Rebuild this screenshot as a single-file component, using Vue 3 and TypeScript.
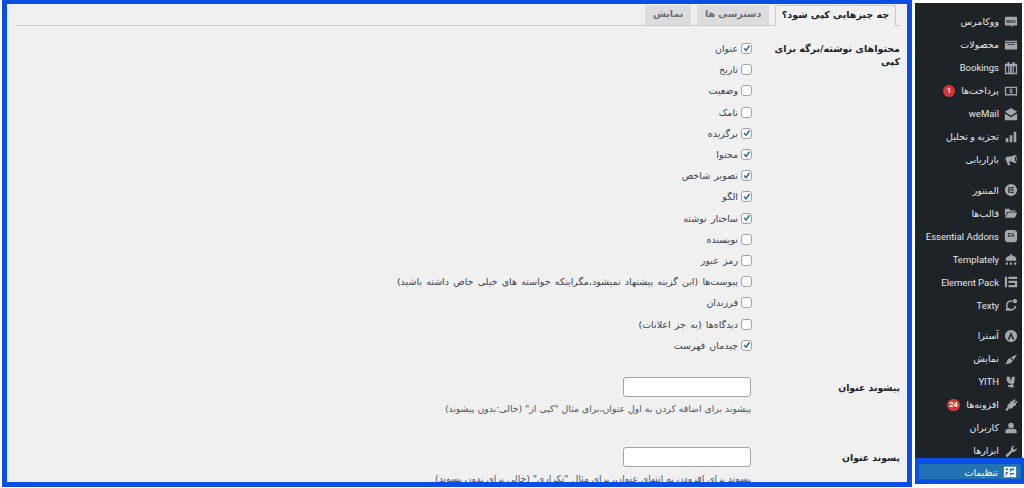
<script setup lang="ts">
interface Option { label: string; checked: boolean }
interface MenuItem { label: string; d: string; text?: string; badge?: string; gap?: boolean; active?: boolean }

const tabs = ['چه چیزهایی کپی شود؟', 'دسترسی ها', 'نمایش']

const options: Option[] = [
  { label: 'عنوان', checked: true },
  { label: 'تاریخ', checked: false },
  { label: 'وضعیت', checked: false },
  { label: 'نامک', checked: false },
  { label: 'برگزیده', checked: true },
  { label: 'محتوا', checked: true },
  { label: 'تصویر شاخص', checked: true },
  { label: 'الگو', checked: true },
  { label: 'ساختار نوشته', checked: true },
  { label: 'نویسنده', checked: false },
  { label: 'رمز عبور', checked: false },
  { label: 'پیوست‌ها (این گزینه پیشنهاد نمیشود،مگراینکه خواسته های خیلی خاص داشته باشید)', checked: false },
  { label: 'فرزندان', checked: false },
  { label: 'دیدگاه‌ها (به جز اعلانات)', checked: false },
  { label: 'چیدمان فهرست', checked: true },
]

const fields = [
  { label: 'پیشوند عنوان', help: 'پیشوند برای اضافه کردن به اول عنوان،برای مثال "کپی از" (خالی:بدون پیشوند)' },
  { label: 'پسوند عنوان', help: 'پسوند برای افزودن به انتهای عنوان، برای مثال "تکراری" (خالی برای بدون پسوند)' },
]

const menu: MenuItem[] = [
  { label: 'ووکامرس', d: 'M1 1h12a1 1 0 0 1 1 1v8a1 1 0 0 1-1 1H9l-1.500 2L7 11H1a1 1 0 0 1-1-1V2a1 1 0 0 1 1-1z', text: 'woo' },
  { label: 'محصولات', d: 'M0 2h14v1.500H0zM0 4.500h14V12H0zM3 6v1h8V6z' },
  { label: 'Bookings', d: 'M3 0h2v2h4V0h2v2h3v12H0V2h3zM1.500 5v7.500h2.200V5zM5 5v7.500h1V5zM8 5v7.500h1V5zM10.300 5v7.500h2.200V5z' },
  { label: 'پرداخت‌ها', d: 'M0 2h14v10H0zM1.500 3.500v7h11v-7zM5.500 4.500h3.200v1.200H6.800v.8h1.900v3H5.500V8.300h1.900v-.8H5.500z', badge: '1' },
  { label: 'weMail', d: 'M7 0l7 4.500L7 9 0 4.500zM0 6.300l7 4.400 7-4.400V14H0z' },
  { label: 'تجزیه و تحلیل', d: 'M1 8h3v5H1zM5.500 5h3v8h-3zM10 1h3v12h-3z' },
  { label: 'بازاریابی', d: 'M13 1v10L6 8.500H5l1 4.500H3.500L2 8.500A3 3 0 0 1 3 3h3zM11.500 3a3 3 0 0 1 2.500 3 3 3 0 0 1-2.500 2.500z' },
  { label: 'المنتور', gap: true, d: 'M7 0a7 7 0 1 0 0 14A7 7 0 0 0 7 0zM4 3.500h1.500v7H4zM6.500 3.500H10V5H6.500zM6.500 6.200H10v1.500H6.500zM6.500 9H10v1.500H6.500z' },
  { label: 'قالب‌ها', d: 'M0 2h5l1.500 2H12v1.500H3L0 11zM3.800 6.500H14l-2.500 6H0z' },
  { label: 'Essential Addons', d: 'M4 0h6a4 4 0 0 1 4 4v6a4 4 0 0 1-4 4H4a4 4 0 0 1-4-4V4a4 4 0 0 1 4-4z', text: 'EA' },
  { label: 'Templately', d: 'M7 0c.5 2 1 3 3 3.500 1.500.5 3 1.500 3 3.500v2H1V7c0-2 2-3 3.500-3.500C6 3 6.500 2 7 0zM1 11h2.500v2.500H1zM5.700 11h2.500v2.500H5.700zM10.500 11H13v2.500h-2.500z' },
  { label: 'Element Pack', d: 'M0 1h2.500v12H0zM4 1h10v2.500H4zM4 5.500h10V13H4v-2.500h7.500V8H4z' },
  { label: 'Texty', d: 'M7 1.500a6 6 0 0 1 1.500.2 3 3 0 0 0-.4 1.800A4 4 0 1 0 11 8h2a6 6 0 0 1-6 5.500H1v-2l1-1A6 6 0 0 1 7 1.500zM11.500 0a2.500 2.500 0 1 1 0 5 2.500 2.500 0 0 1 0-5z' },
  { label: 'آسترا', gap: true, d: 'M7 0a7 7 0 1 0 0 14A7 7 0 0 0 7 0zM7 2.500l3.800 8.500H8.800L7 6.800 5.200 11H3.200z' },
  { label: 'نمایش', d: 'M14 1.500L10 8 7 5zM6 5.800l3.200 3.200-1 1.200C7 12 4 13 0 13c1.500-1 1.800-2 2.500-4 .5-1.500 2-2.800 3.500-3.200z' },
  { label: 'YITH', d: 'M2 1h3.500l1.500 5 1-5h3.500l-.5 5c-.5 3-2 3.500-3 4l2 .5V13c-2 .5-4 .5-6-.5l-.5-2h3l1-1.500C4 9 2.500 7 2 4z' },
  { label: 'افزونه‌ها', d: 'M11 0l1.500 1.500L10 4l.8.8 2.500-2.500L14.500 3.500 12 6l1 1-1 1-1-.5-3 3.500H5L2 14 .5 12.500 3 9.500V7L6.500 4 6 3l1-1 1 1z', badge: '24' },
  { label: 'کاربران', d: 'M7 1a3.200 3.200 0 1 1 0 6.400A3.200 3.200 0 0 1 7 1zM4 7.500c2 1.200 4 1.200 6 0 2 .5 3.500 2 3.500 3.500v2H.5v-2C.5 9.500 2 8 4 7.500z' },
  { label: 'ابزارها', d: 'M13.500 3.500a4 4 0 0 1-5 4.500L3.500 13.500a1.400 1.400 0 0 1-2-.1 1.400 1.400 0 0 1-.2-2L7 6a4 4 0 0 1 4.500-5L9 3.300 9.800 5l1.700.7z' },
  { label: 'تنظیمات', active: true, d: 'M0 1h14v12H0zM2 3v2h3V3zM7 3v3.500h1.500V5H12V3zM2 7v4h1.500V8.500H5V7zM7 8v3h1.500V9.500H12V8z' },
]
</script>

<template>
  <div class="page">
    <main class="panel" dir="rtl">
      <nav class="tabs">
        <span v-for="(tab, i) in tabs" :key="tab" class="tab" :class="{ current: i === 0 }">{{ tab }}</span>
      </nav>
      <form class="form" @submit.prevent>
        <div class="row first">
          <h3 class="heading">محتواهای نوشته/برگه برای کپی</h3>
          <ul class="checks">
            <li v-for="opt in options" :key="opt.label">
              <label class="check">
                <input type="checkbox" :checked="opt.checked" />
                <span>{{ opt.label }}</span>
              </label>
            </li>
          </ul>
        </div>
        <div v-for="field in fields" :key="field.label" class="row field">
          <h3 class="heading narrow">{{ field.label }}</h3>
          <div class="control">
            <input class="text" type="text" />
            <p class="help">{{ field.help }}</p>
          </div>
        </div>
      </form>
    </main>

    <aside class="side" dir="rtl">
      <ul class="menu">
        <li v-for="item in menu" :key="item.label" class="item" :class="{ gap: item.gap, active: item.active }">
          <div class="link">
            <svg class="icon" viewBox="-1 -1 16 16" aria-hidden="true">
              <path :d="item.d" fill-rule="evenodd" />
              <text v-if="item.text" x="7" y="8" text-anchor="middle" class="icon-text">{{ item.text }}</text>
            </svg>
            <span class="name">{{ item.label }}</span>
            <span v-if="item.badge" class="badge">{{ item.badge }}</span>
          </div>
        </li>
      </ul>
    </aside>
  </div>
</template>

<style>
html, body { margin: 0; background: #fff; }
</style>

<style scoped>
.page {
  width: 1024px;
  height: 488px;
  overflow: hidden;
  background: #fff;
  display: flex;
  align-items: flex-start;
  padding-left: 2px;
  box-sizing: border-box;
  font-family: "DejaVu Sans", "Noto Sans", sans-serif;
  font-size: 9.5px;
  color: #3c434a;
}
.panel {
  width: 910px;
  height: 487px;
  flex: none;
  box-sizing: border-box;
  border: 5px solid #0a4ee4;
  border-top-width: 4px;
  background: #f0f0f1;
  overflow: hidden;
}
.tabs {
  display: flex;
  gap: 5.5px;
  height: 21px;
  margin: 0 7px 0 9px;
  padding: 0 4px;
  border-bottom: 1px solid #c9cacd;
  align-items: flex-end;
}
.tab {
  height: 20px;
  line-height: 17px;
  padding: 0 8px;
  box-sizing: border-box;
  background: #dcdcde;
  color: #6d7277;
  font-weight: 700;
  font-size: 9.5px;
}
.tab.current {
  background: #f0f0f1;
  color: #1d2327;
  border: 1px solid #c9cacd;
  border-bottom: none;
  height: 21px;
  margin-bottom: -1px;
  padding: 0 6px;
}
.form { padding: 12px 7px 0 0; }
.row {
  display: grid;
  grid-template-columns: 148px 1fr;
}
.field { height: 70px; }
.first { margin-bottom: 21.5px; }
.heading {
  margin: 0;
  padding-left: 12px;
  font-size: 9.5px;
  line-height: 13px;
  font-weight: 700;
  color: #1d2327;
}
.first .heading { padding-top: 4px; }
.narrow { padding-top: 3.5px; font-size: 9.3px; }
.checks { list-style: none; margin: 0; padding: 0; }
.checks li { height: 21.2px; display: flex; align-items: center; }
.check { display: flex; align-items: center; gap: 3px; word-spacing: 1.2px; }
.check input {
  appearance: none;
  width: 11px;
  height: 11px;
  margin: 0;
  flex: none;
  position: relative;
  background: #fff;
  border: 1px solid #a0a3a8;
  border-radius: 3px;
  box-sizing: border-box;
}
.check input:checked::before {
  content: "";
  position: absolute;
  inset: 0.5px;
  background: #2271b1;
  clip-path: polygon(12% 50%, 30% 40%, 42% 60%, 80% 8%, 96% 22%, 44% 90%);
}
.control { padding-right: 1px; }
.text {
  display: block;
  width: 128px;
  height: 20px;
  margin: 0;
  padding: 0 6px;
  box-sizing: border-box;
  background: #fff;
  border: 1px solid #a0a3a8;
  border-radius: 3px;
}
.help { margin: 4.5px 0 0; line-height: 13px; font-size: 9.3px; color: #50575e; }

.side {
  width: 107px;
  flex: none;
  margin: 3px 0 0 3px;
  background: #1d2327;
}
.menu { list-style: none; margin: 0; padding: 7px 0 0; }
.item { height: 23px; }
.item.gap { margin-top: 7.5px; }
.link {
  height: 23px;
  display: flex;
  align-items: center;
  gap: 5px;
  padding-right: 4px;
  color: #e6e7e8;
  font-family: Roboto, "DejaVu Sans", sans-serif;
  font-size: 9.5px;
  white-space: nowrap;
}
.icon { width: 14px; height: 14px; flex: none; fill: #a3a7ab; }
.icon-text {
  font-family: "Liberation Sans", sans-serif;
  font-size: 5.5px;
  font-weight: 700;
  fill: #1d2327;
}
.badge {
  min-width: 7px;
  height: 12px;
  line-height: 12px;
  padding: 0 2.5px;
  margin-right: 1px;
  border-radius: 7px;
  background: #d63638;
  color: #fff;
  font-size: 7.5px;
  font-weight: 700;
  text-align: center;
}
.item.active {
  height: 26px;
  margin-top: -4px;
  margin-right: -2px;
  width: 109px;
  background: #0a4ee4;
  padding: 6px 3px 5px 4px;
  box-sizing: border-box;
  position: relative;
}
.active .link {
  height: 15px;
  background: #2271b1;
  color: #fff;
  align-items: flex-end;
  line-height: 13px;
}
.active .icon { fill: #fff; }
</style>
